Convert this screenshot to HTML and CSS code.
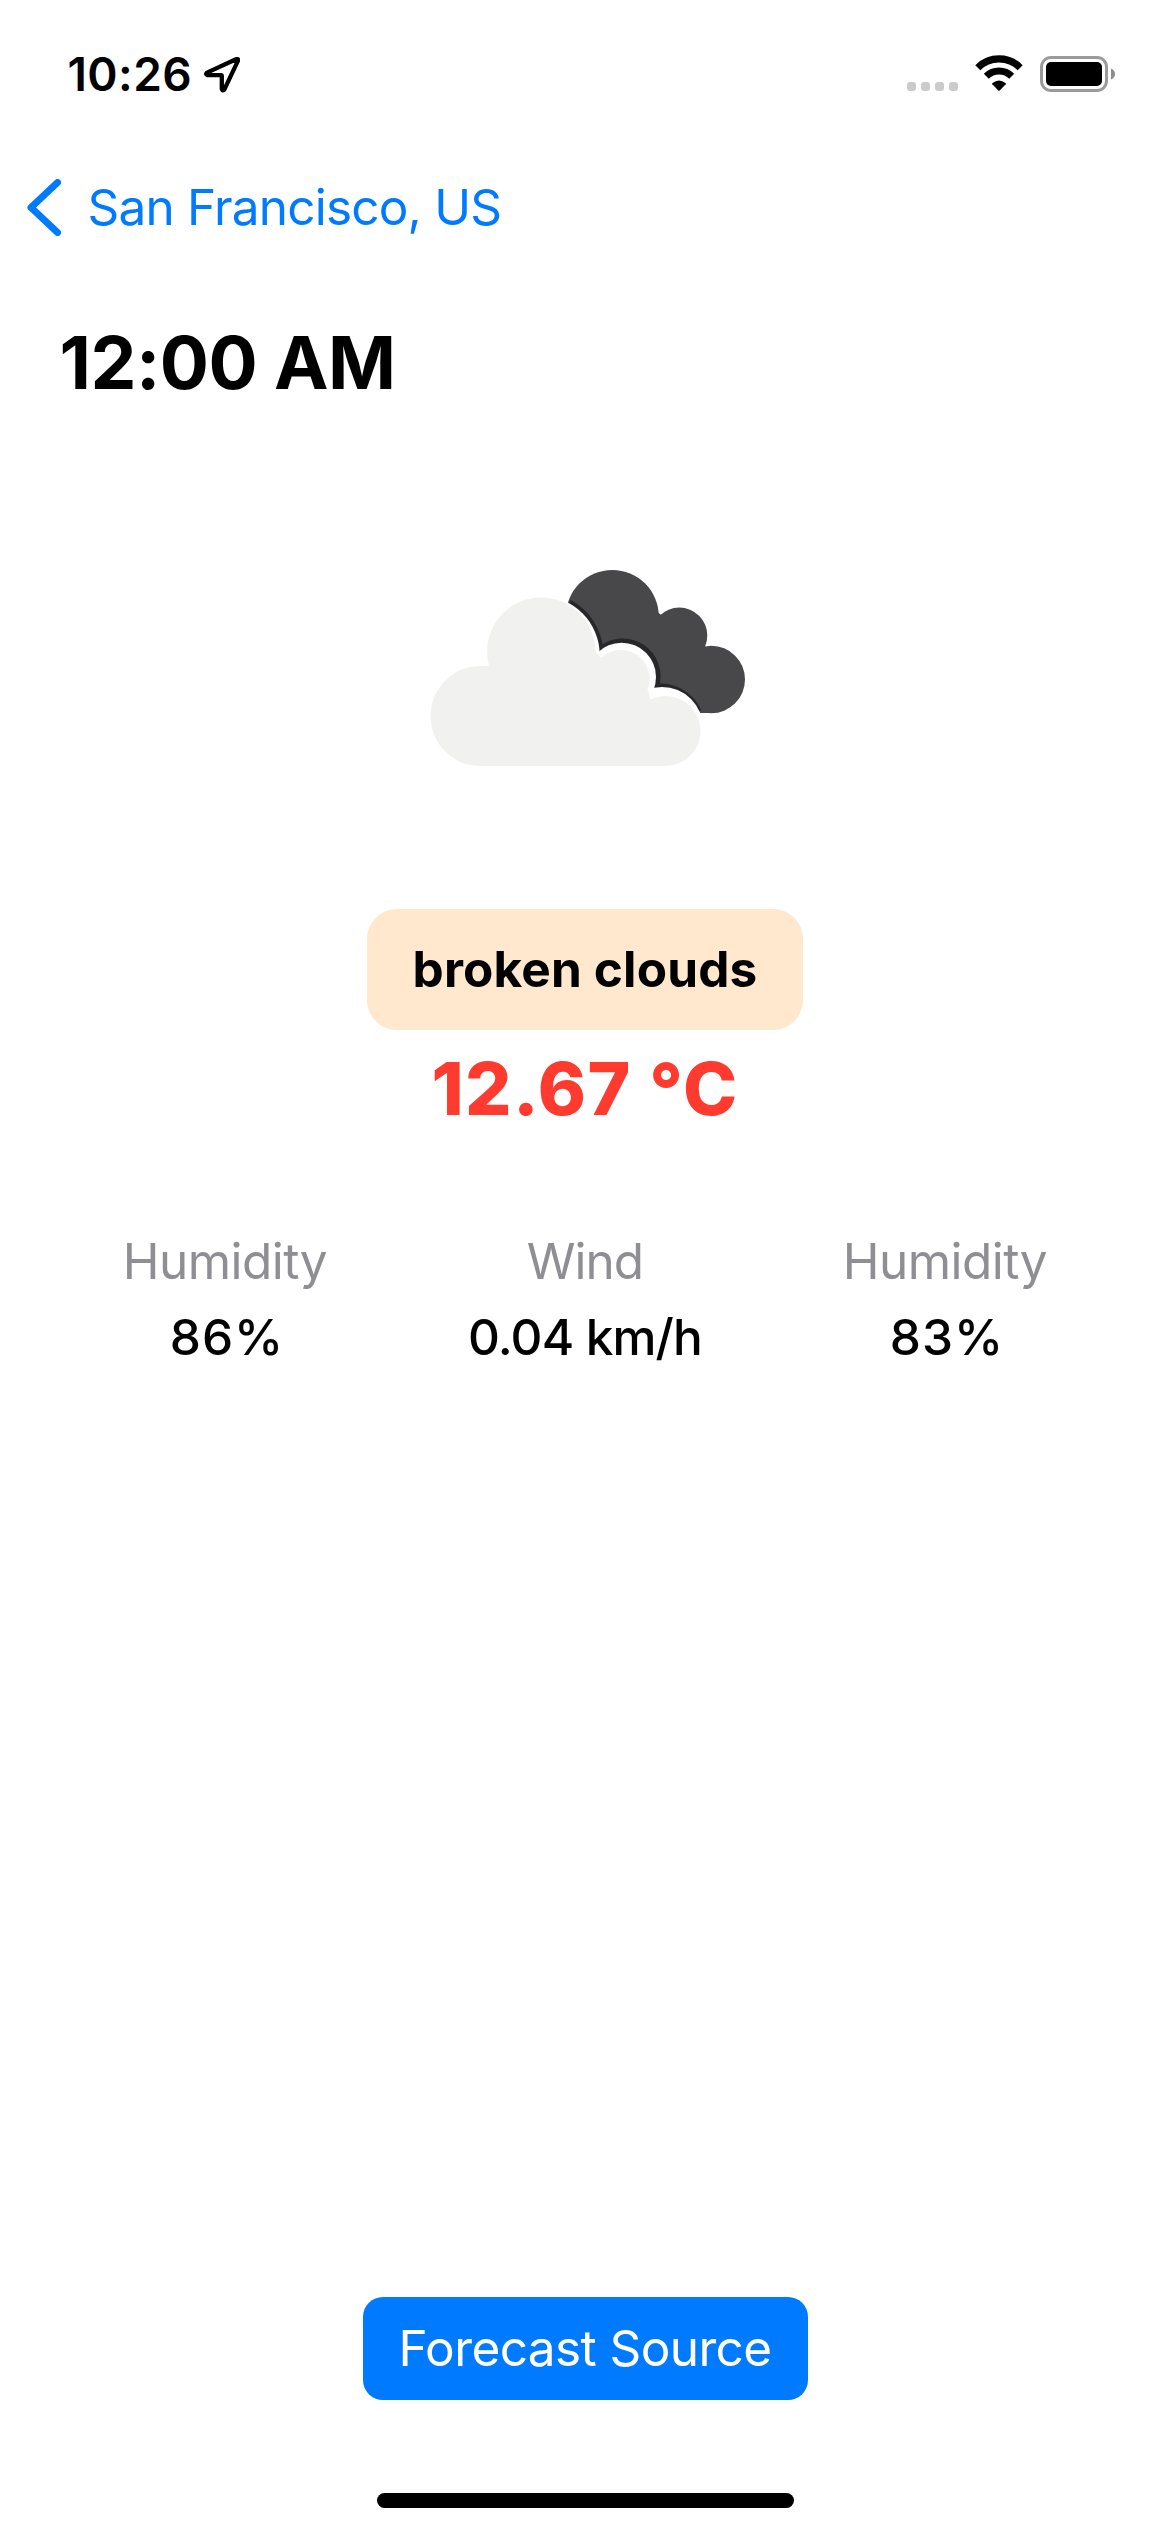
FILE: index.html
```html
<!DOCTYPE html>
<html lang="en">
<head>
<meta charset="utf-8">
<title>Forecast detail</title>
<link rel="stylesheet" href="styles.css">
</head>
<body>
<div class="screen">
  <header class="status">
    <div class="status-left">
      <span class="clock">10:26</span>
      <svg class="location" viewBox="0 0 36 36" width="36" height="36">
        <path d="M3 15.600 32 2.200Q34.600 1.400 33.900 3.800L20.300 32.600Q18.400 34.400 17.800 32V18.900Q17.800 18.100 17 18.100H3.400Q1 17.400 3 15.600Z" fill="none" stroke="#000" stroke-width="4.300" stroke-linejoin="round"/>
      </svg>
    </div>
    <div class="status-right">
      <div class="signal"><i></i><i></i><i></i><i></i></div>
      <svg class="wifi" viewBox="0 0 48 36" width="48" height="36">
        <path d="M2.800 12.700A30 30 0 0 1 45.200 12.700" fill="none" stroke="#000" stroke-width="7.200"/>
        <path d="M11.300 21.300A18 18 0 0 1 36.700 21.300" fill="none" stroke="#000" stroke-width="7"/>
        <path d="M17.300 29.300Q16.800 28.600 17.500 28Q24 22.800 30.500 28Q31.200 28.600 30.700 29.300L24.700 35.400Q24 36 23.300 35.400Z"/>
      </svg>
      <svg class="battery" viewBox="0 0 75 36" width="75" height="36">
        <rect x="1.500" y="1.500" width="65" height="33" rx="9.500" fill="none" stroke="#9b9b9b" stroke-width="3"/>
        <rect x="6" y="6" width="56" height="24" rx="5"/>
        <path d="M71 12.500Q75 14.500 75 18T71 23.500Z" fill="#8c8c8c"/>
      </svg>
    </div>
  </header>

  <nav class="nav">
    <svg class="chevron" viewBox="0 0 34 57" width="34" height="57">
      <path d="M30.500 3.500 4 28.500 30.500 53.500" fill="none" stroke="#007aff" stroke-width="7" stroke-linecap="round" stroke-linejoin="round"/>
    </svg>
    <span class="back">San Francisco, US</span>
  </nav>

  <main class="content">
    <h1 class="title">12:00 AM</h1>
    <svg class="clouds" viewBox="-5 0 380 260" width="380" height="260">
      <mask id="front">
        <rect width="380" height="260" fill="#fff"/>
        <circle cx="140.700" cy="115" r="59"/>
        <circle cx="221.700" cy="137" r="34.300"/>
        <circle cx="262" cy="188" r="41"/>
      </mask>
      <g mask="url(#front)">
        <g fill="#48484a">
          <circle cx="212.300" cy="76.500" r="46.500"/>
          <circle cx="279.300" cy="95.500" r="28"/>
          <circle cx="311.300" cy="139.500" r="33.700"/>
          <path d="M180 70H255L302 108 311 173H290L190 130Z"/>
        </g>
        <g fill="none" stroke="#27272a" stroke-width="7">
          <path d="M169 63.200A59 59 0 0 1 199.900 111"/>
          <path d="M200 110.600A34.300 34.300 0 0 1 255.500 146.500"/>
          <path d="M255 147.500A41 41 0 0 1 298 171.500"/>
        </g>
      </g>
      <g fill="#f1f1ef">
        <circle cx="80.500" cy="176" r="50"/>
        <circle cx="141.200" cy="111.500" r="54"/>
        <circle cx="221" cy="138.500" r="28.500"/>
        <circle cx="265.500" cy="191" r="35"/>
        <path d="M80 126H87L141 111H195L221 138L248 150L250 158L266 191V226H80Z"/>
      </g>
    </svg>
    <div class="condition">broken clouds</div>
    <div class="temperature">12.67 °C</div>
    <section class="metrics">
      <div class="metric"><span class="label">Humidity</span><span class="value percent">86%</span></div>
      <div class="metric"><span class="label wind">Wind</span><span class="value">0.04 km/h</span></div>
      <div class="metric"><span class="label">Humidity</span><span class="value percent">83%</span></div>
    </section>
  </main>

  <footer class="footer">
    <button class="source">Forecast Source</button>
    <div class="home-indicator"></div>
  </footer>
</div>
</body>
</html>
```

FILE: styles.css
```css
* { box-sizing: border-box; }

body {
  margin: 0;
  background: #fff;
  color: #000;
  font-family: Inter, "Liberation Sans", sans-serif;
  font-size: 49.5px;
  line-height: 61px;
}

svg { display: block; flex: none; }

.screen {
  display: flex;
  flex-direction: column;
  width: 1170px;
  height: 2532px;
}

.status {
  display: flex;
  align-items: center;
  justify-content: space-between;
  height: 148px;
  padding: 0 55px 0 67.5px;
}

.status-left { display: flex; align-items: center; gap: 12px; }
.clock { font-size: 46px; font-weight: 600; letter-spacing: 0.4px; }
.location { margin-top: 2px; }

.status-right { display: flex; align-items: center; }
.signal { display: flex; gap: 5px; margin: 25px 17px 0 0; }
.signal i { width: 9px; height: 9px; border-radius: 3px; background: #cbcbcb; }
.wifi { margin: -2px 17px 0 0; }

.nav {
  display: flex;
  align-items: center;
  gap: 26.5px;
  height: 118px;
  padding-left: 27px;
  color: #007aff;
}
.back { letter-spacing: -0.8px; }

.content { display: flex; flex-direction: column; align-items: center; }

.title {
  align-self: stretch;
  margin: 52.5px 0 0;
  padding-left: 59.5px;
  font-size: 73px;
  font-weight: 700;
  line-height: 88px;
  letter-spacing: -0.5px;
}

.clouds { margin-top: 133px; }

.condition {
  width: 436px;
  margin-top: 109px;
  padding: 30px 0;
  border-radius: 30px;
  background: #ffe8cd;
  font-weight: 700;
  letter-spacing: 0.16px;
  text-align: center;
}

.temperature {
  margin-top: 15.5px;
  color: #ff3b30;
  font-size: 73px;
  font-weight: 800;
  line-height: 88px;
  letter-spacing: 1.4px;
}

.metrics {
  display: grid;
  grid-template-columns: repeat(3, 360px);
  margin-top: 98px;
}
.metric { display: flex; flex-direction: column; align-items: center; gap: 15px; }
.label { color: #8e8e93; letter-spacing: -0.55px; }
.label.wind { letter-spacing: -1px; }
.value { font-weight: 500; letter-spacing: -0.85px; }
.value.percent { padding-left: 4px; letter-spacing: 1px; }

.footer {
  display: flex;
  flex-direction: column;
  align-items: center;
  gap: 93px;
  margin-top: auto;
  padding-bottom: 24px;
}

.source {
  width: 445px;
  height: 103px;
  padding: 0;
  border: 0;
  border-radius: 20px;
  background: #007aff;
  color: #fff;
  font: inherit;
  letter-spacing: -0.6px;
}

.home-indicator {
  width: 417px;
  height: 15px;
  border-radius: 8px;
  background: #000;
}
```
